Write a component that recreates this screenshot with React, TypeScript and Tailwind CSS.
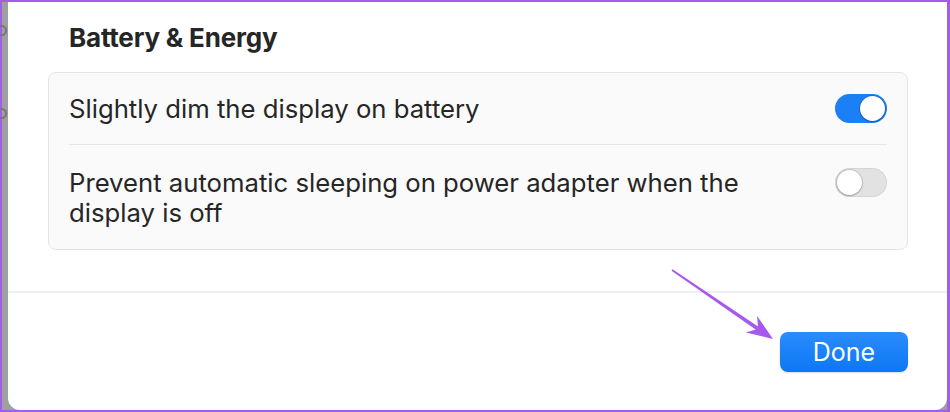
import React from 'react'

function Toggle({ on }: { on: boolean }) {
  return (
    <div
      className={`relative w-[52px] h-[29px] rounded-full shrink-0 ${
        on ? 'bg-[#1b7ff6]' : 'bg-[#e2e2e2] shadow-[inset_0_0_0_1px_rgba(0,0,0,0.06)]'
      }`}
    >
      <div
        className={`absolute top-[2px] w-[25px] h-[25px] rounded-full bg-white shadow-[0_0_0_1px_rgba(0,0,0,0.12),0_1px_2px_rgba(0,0,0,0.2)] ${
          on ? 'right-[2px]' : 'left-[2px]'
        }`}
      />
    </div>
  )
}

export default function App() {
  return (
    <div
      className="relative w-[950px] h-[412px] bg-[#a45de8] pl-[2px] pt-[2px] pr-[3px] pb-[2px] overflow-hidden"
      style={{ fontFamily: 'Inter, "Noto Sans", sans-serif' }}
    >
      <div className="relative flex h-full bg-[#9f9f9f]">
        {/* backdrop sliver with window controls */}
        <div className="relative w-[6px] shrink-0">
          <div className="absolute left-[-6px] top-[23px] w-[11px] h-[11px] rounded-full border-2 border-[#777]" />
          <div className="absolute left-[-6px] top-[106px] w-[11px] h-[11px] rounded-full border-2 border-[#777]" />
        </div>

        {/* sheet */}
        <div className="flex-1 flex flex-col bg-white rounded-b-[12px] text-[#262626]">
          <div className="pl-[40px] pr-[39px] pt-[20px]">
            <h2 className="pl-[21px] text-[26px] leading-[32px] font-bold tracking-[-0.2px]">Battery &amp; Energy</h2>

            <div className="mt-[18px] bg-[#fafafa] border border-[#e4e4e4] rounded-[8px] px-[20px]">
              <div className="flex items-center justify-between h-[72px] border-b border-[#e6e6e6]">
                <p className="text-[25.7px] leading-[30px]">Slightly dim the display on battery</p>
                <Toggle on />
              </div>
              <div className="flex items-start justify-between pt-[23px] pb-[21px]">
                <p className="text-[25.7px] leading-[30px] w-[700px]">
                  Prevent automatic sleeping on power adapter when the display is off
                </p>
                <div className="pt-[0px]">
                  <Toggle on={false} />
                </div>
              </div>
            </div>
          </div>

          <div className="mt-[41px] border-t-2 border-[#efefef]" />

          <div className="flex justify-end pr-[39px] pt-[39px]">
            <button className="w-[128px] h-[40px] rounded-[8px] bg-gradient-to-b from-[#2a8cfd] to-[#0a77f4] text-white text-[25px] leading-none shadow-[0_1px_2px_rgba(0,0,0,0.15)]">
              Done
            </button>
          </div>
        </div>
      </div>

      {/* annotation arrow */}
      <svg className="absolute inset-0 pointer-events-none" width="950" height="412" viewBox="0 0 950 412">
        <polygon points="671.5,270.7 672.5,269.3 759.2,327.2 757,330.5" fill="#a758ee" />
        <polygon points="773,339 745.9,332.5 758.1,328.8 757.1,316" fill="#a758ee" />
      </svg>
    </div>
  )
}
